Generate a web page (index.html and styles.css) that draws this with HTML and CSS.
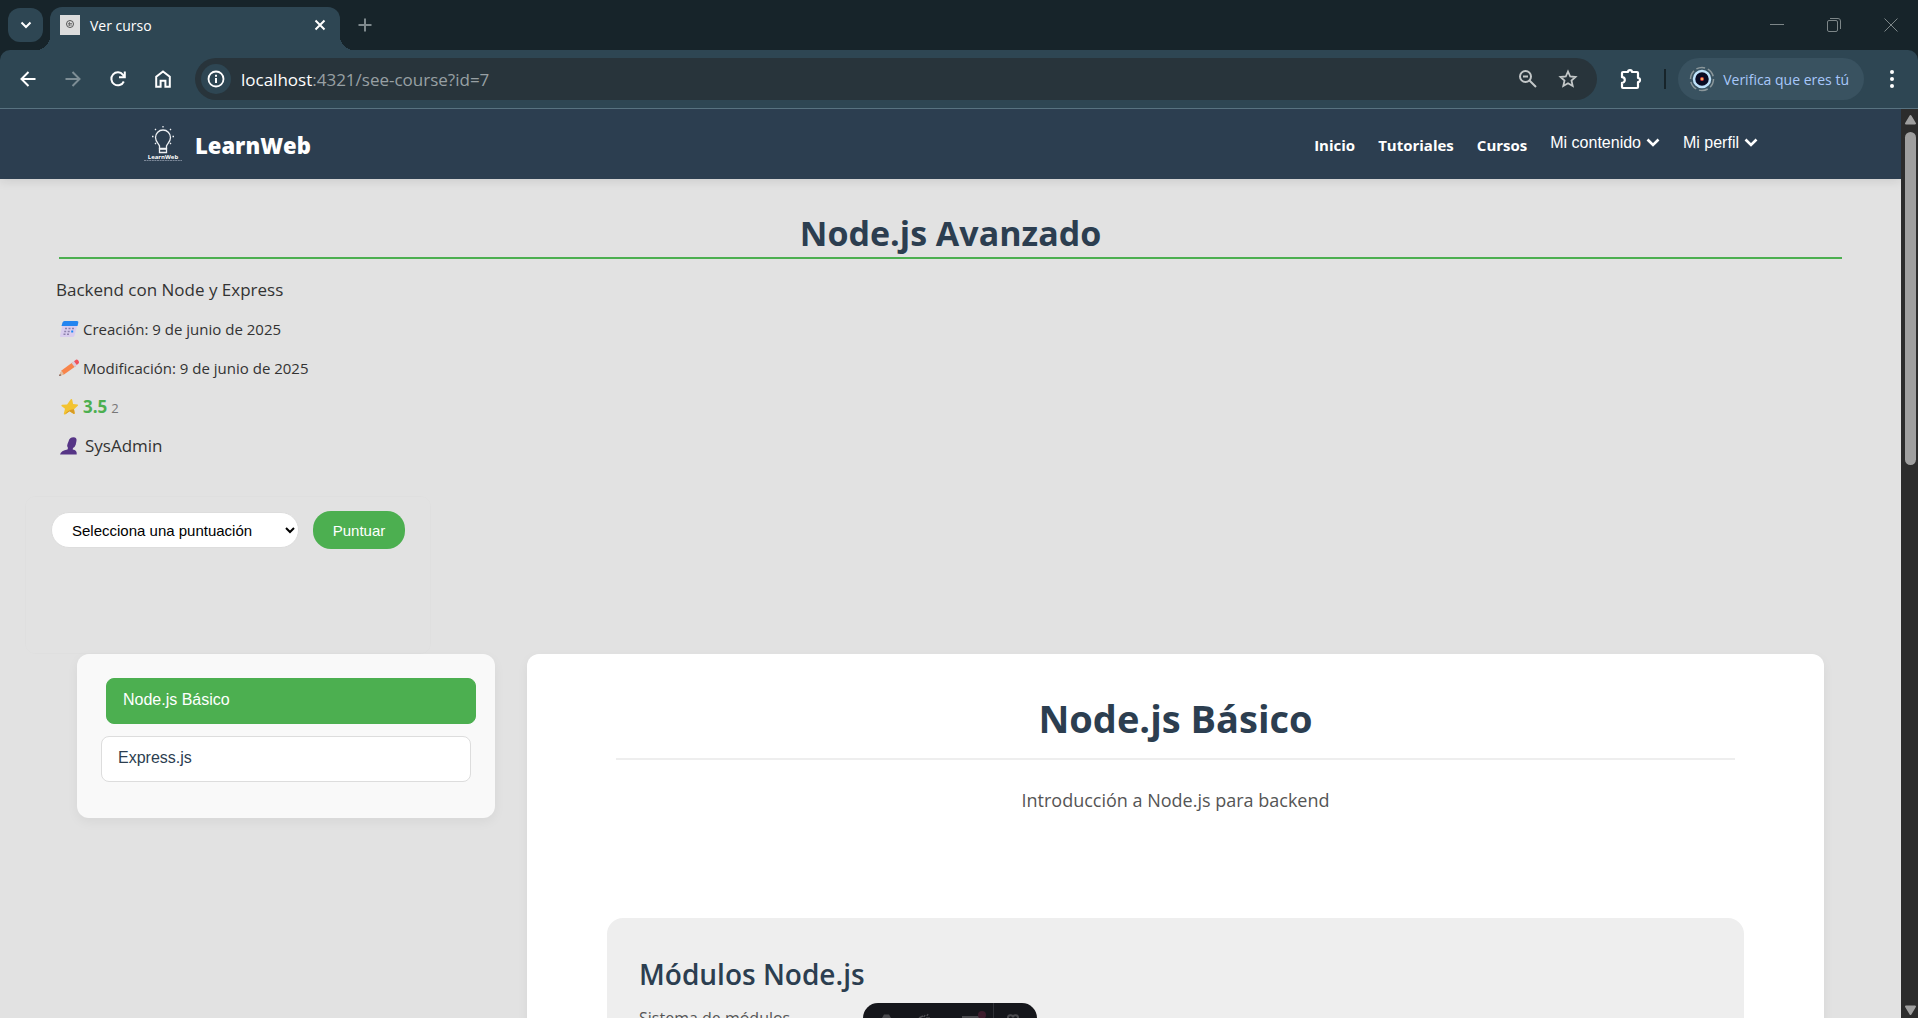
FILE: index.html
```html
<!DOCTYPE html>
<html lang="es">
<head>
<meta charset="utf-8">
<meta name="viewport" content="width=device-width, initial-scale=1">
<title>Ver curso</title>
<link rel="stylesheet" href="styles.css">
</head>
<body>
<div class="browser">
  <div class="tabstrip">
    <button class="tab-search" aria-label="Buscar pestañas">
      <svg width="12" height="8" viewBox="0 0 12 8"><path d="M1.500 1.500 6 6l4.500-4.500" fill="none" stroke="#fff" stroke-width="2"/></svg>
    </button>
    <div class="tab">
      <svg class="favicon" width="20" height="20" viewBox="0 0 20 20"><rect width="20" height="20" fill="#dcdcdc"/><circle cx="10" cy="9" r="3.500" fill="none" stroke="#555" stroke-width="1"/><path d="M8 8.500h4M8 10h4M9.500 7v4" stroke="#666" stroke-width=".8"/></svg>
      <span class="tab-title">Ver curso</span>
      <button class="icon-button tab-close" aria-label="Cerrar pestaña">
        <svg width="12" height="12" viewBox="0 0 12 12"><path d="m1.500 1.500 9 9m0-9-9 9" stroke="#fff" stroke-width="2"/></svg>
      </button>
    </div>
    <button class="icon-button new-tab" aria-label="Nueva pestaña">
      <svg width="14" height="14" viewBox="0 0 14 14"><path d="M7 .5v13M.5 7h13" stroke="#7f898d" stroke-width="2"/></svg>
    </button>
    <div class="window-controls">
      <button class="icon-button" aria-label="Minimizar"><svg width="14" height="14" viewBox="0 0 14 14"><path d="M0 6.500h14" stroke="#7d8688"/></svg></button>
      <button class="icon-button" aria-label="Restaurar"><svg width="14" height="14" viewBox="0 0 14 14"><rect x=".5" y="2.500" width="10" height="11" rx="1.500" fill="none" stroke="#7d8688"/><path d="M3 .5h8a2.500 2.500 0 0 1 2.500 2.500v8" fill="none" stroke="#7d8688"/></svg></button>
      <button class="icon-button" aria-label="Cerrar"><svg width="14" height="14" viewBox="0 0 14 14"><path d="m.5.5 13 13m0-13-13 13" stroke="#7d8688"/></svg></button>
    </div>
  </div>

  <div class="toolbar">
    <div class="toolbar-nav">
      <button class="icon-button" aria-label="Atrás"><svg width="16" height="16" viewBox="0 0 16 16"><path d="M15.500 8H2M8.500 1 1.500 8l7 7" fill="none" stroke="#fff" stroke-width="2"/></svg></button>
      <button class="icon-button" aria-label="Adelante"><svg width="16" height="16" viewBox="0 0 16 16"><path d="M.5 8H14M7.500 1l7 7-7 7" fill="none" stroke="#7d8d95" stroke-width="2"/></svg></button>
      <button class="icon-button" aria-label="Recargar"><svg width="16" height="16" viewBox="0 0 16 16"><path d="M13.800 10.500A6.500 6.500 0 1 1 13 3.800L14.500 5.500M14.800.5v5.700H9" fill="none" stroke="#fff" stroke-width="2"/></svg></button>
      <button class="icon-button" aria-label="Inicio"><svg width="16" height="18" viewBox="0 0 16 18"><path d="M1.200 16.800V6.800L8 1.500l6.800 5.300v10h-4.400v-6H5.600v6z" fill="none" stroke="#fff" stroke-width="2"/></svg></button>
    </div>
    <div class="omnibox">
      <button class="site-info" aria-label="Información del sitio"><svg width="18" height="18" viewBox="0 0 18 18"><circle cx="9" cy="9" r="7.500" fill="none" stroke="#fff" stroke-width="1.800"/><path d="M9 8v5M9 4.800v2" stroke="#fff" stroke-width="2"/></svg></button>
      <div class="url" role="textbox" aria-label="Dirección"><span class="url-host">localhost</span>:4321/see-course?id=7</div>
      <button class="icon-button" aria-label="Zoom"><svg width="20" height="20" viewBox="0 0 20 20"><circle cx="7.500" cy="7.500" r="5.500" fill="none" stroke="#c3c7c8" stroke-width="2"/><path d="m11.500 11.500 6.500 6.500M5 7.500h5" stroke="#c3c7c8" stroke-width="2"/></svg></button>
      <button class="icon-button" aria-label="Agregar a favoritos"><svg width="20" height="20" viewBox="0 0 20 20"><path d="m10 2.500 2.200 5 5.300.5-4 3.600 1.200 5.400-4.700-2.800L5.300 17l1.200-5.400-4-3.600 5.300-.5z" fill="none" stroke="#c3c7c8" stroke-width="1.800"/></svg></button>
    </div>
    <button class="icon-button extensions" aria-label="Extensiones"><svg width="22" height="22" viewBox="0 0 22 22"><path d="M2 5q0-1 1-1H8a2 1.800 0 0 1 4 0H17q1 0 1 1v5a2 2 0 0 1 0 4v5q0 1-1 1H3q-1 0-1-1v-4.200a2.800 2.800 0 0 0 0-5.600z" fill="none" stroke="#fff" stroke-width="2.200" stroke-linejoin="round"/></svg></button>
    <span class="toolbar-divider"></span>
    <button class="profile">
      <svg width="26" height="26" viewBox="0 0 26 26"><circle cx="13" cy="13" r="11.500" fill="none" stroke="#8b979b" stroke-width="1.500" stroke-dasharray="9 3"/><circle cx="13" cy="13" r="8" fill="#0a0c24" stroke="#bfe2fb" stroke-width="2.500"/><circle cx="13" cy="13" r="2" fill="#e0443e"/><circle cx="13" cy="13" r="1" fill="#ffd76b"/></svg>
      <span>Verifica que eres tú</span>
    </button>
    <button class="icon-button menu" aria-label="Menú"><svg width="6" height="20" viewBox="0 0 6 20"><g fill="#fff"><circle cx="3" cy="3" r="2"/><circle cx="3" cy="10" r="2"/><circle cx="3" cy="17" r="2"/></g></svg></button>
  </div>

  <div class="viewport">
    <div class="page">
      <header class="site-header">
        <a class="brand" href="#">
          <svg width="40" height="40" viewBox="0 0 40 40"><g fill="none" stroke="#eef1f4" stroke-width="1.300"><path d="M16.500 23.500v-2.500c-.5-2.500-4-4-4-8.500a7.500 7.500 0 0 1 15 0c0 4.500-3.500 6-4 8.500v2.500z"/><path d="M16.500 24h7v3.500h-7z"/><path d="M20 1v1.500M9 11.500h1.500M29.500 11.500H31M12 4l1 1M28 4l-1 1M12 19l1-1M28 19l-1-1"/></g><text x="20" y="34" text-anchor="middle" class="brand-mark">LearnWeb</text><path d="M1 35.500h38" stroke="#8f9bab" stroke-width=".8" stroke-dasharray="2 .6"/></svg>
          <span class="brand-name">LearnWeb</span>
        </a>
        <nav class="site-nav">
          <a href="#">Inicio</a>
          <a href="#">Tutoriales</a>
          <a href="#">Cursos</a>
          <button class="nav-menu">Mi contenido <svg width="14" height="10" viewBox="0 0 14 10"><path d="m1.500 1.500 5.500 5.500 5.500-5.500" fill="none" stroke="#fff" stroke-width="2.600"/></svg></button>
          <button class="nav-menu">Mi perfil <svg width="14" height="10" viewBox="0 0 14 10"><path d="m1.500 1.500 5.500 5.500 5.500-5.500" fill="none" stroke="#fff" stroke-width="2.600"/></svg></button>
        </nav>
      </header>

      <main>
        <section class="course">
          <h1 class="course-title">Node.js Avanzado</h1>
          <p class="course-description">Backend con Node y Express</p>
          <ul class="course-meta">
            <li><svg width="20" height="18" viewBox="0 0 20 18"><path d="M4 3h15l-3.500 12.500q-.5 1.500-2 1.500H2q-1.500 0-1-1.500z" fill="#d9cdee"/><path d="M5.500 1H18q1.800 0 1.300 1.800L18.500 6H2.500l1-3.500Q4 1 5.500 1z" fill="#2385f0"/><path d="M6 8.500h2m1.500 0h2m1.500 0h2M5.200 11.500h2m1.500 0h2M4.500 14.300h2m1.500 0h2" stroke="#8d82ad" stroke-width="1.500"/><path d="M12.200 11.500h2" stroke="#1787f5" stroke-width="2"/></svg><span>Creación: 9 de junio de 2025</span></li>
            <li><svg width="20" height="18" viewBox="0 0 20 18"><path d="m0 17 2.500-5.500L14 3l3 4L5 15.500z" fill="#f8844a"/><path d="m0 17 2.500-5.500L5 15.500z" fill="#dfc0a5"/><path d="m0 17 1-2 1.200 1.300z" fill="#584b52"/><path d="M12.500 4 15 2l3 4-2.500 2z" fill="#d9ccdc"/><path d="m15 2.200 2.300-1.700q2.700 0 2.700 3.500l-2.200 2z" fill="#f0525c"/></svg><span>Modificación: 9 de junio de 2025</span></li>
            <li><svg width="20" height="18" viewBox="0 0 20 18"><path d="M12 1q1-.3 1.200.7l.9 4.300 4.500.5q1 .4.200 1.300l-3.800 3.500.7 4q-.2 1-1.200.5l-4-2.500-4.500 3.200q-1.200.3-1.200-.8l1.200-5L2.500 8q-.5-1 .6-1.200l5-.3z" fill="#f3c331"/><path d="m15 11.300.7 4q-.2 1-1.200.5l-4-2.500-4.500 3.200q2-4.500 9-5.200z" fill="#d89b25"/></svg><span><strong>3.5</strong> <small>2</small></span></li>
            <li class="course-author"><svg width="20" height="18" viewBox="0 0 20 18"><path d="M9.500 4.500Q10.500.3 14.500.3q3.500 0 3 3.500l-.8 4q-1 2.700-2.700 3.200l-.3 1.500q4.500.5 4 5H1q1-4 7.500-5l.5-1.500q-1.500-2-.5-4z" fill="#563586"/></svg><span>SysAdmin</span></li>
          </ul>
          <form class="rating">
            <select aria-label="Puntuación"><option>Selecciona una puntuación</option><option>1</option><option>2</option><option>3</option><option>4</option><option>5</option></select>
            <button type="button">Puntuar</button>
          </form>
        </section>

        <div class="course-body">
          <aside class="lessons">
            <button class="lesson is-active">Node.js Básico</button>
            <button class="lesson">Express.js</button>
          </aside>
          <article class="lesson-content">
            <h2>Node.js Básico</h2>
            <p class="lesson-intro">Introducción a Node.js para backend</p>
            <section class="module">
              <h3>Módulos Node.js</h3>
              <p>Sistema de módulos</p>
            </section>
          </article>
        </div>
      </main>
    </div>
    <div class="scrollbar" aria-hidden="true">
      <svg width="13" height="11" viewBox="0 0 13 11"><path d="M6.500 2 11 9.500H2z" fill="#9f9f9f" stroke="#9f9f9f" stroke-width="2" stroke-linejoin="round"/></svg>
      <div class="scroll-track"><div class="scroll-thumb"></div></div>
      <svg width="13" height="11" viewBox="0 0 13 11"><path d="M6.500 9 11 1.500H2z" fill="#9f9f9f" stroke="#9f9f9f" stroke-width="2" stroke-linejoin="round"/></svg>
    </div>
  </div>

  <div class="capture-bar" aria-hidden="true">
    <svg width="174" height="15" viewBox="0 0 174 15"><path d="M130.500 0v15" stroke="#303136"/><path d="m19 15 2-3.500h5l2 3.500z" fill="#4a4a4e"/><path d="m56 15 4-2M62 12l-1 2M65 11l-1 2M63 15h4" stroke="#4a4a4e" stroke-width="1.500"/><path d="M99 13h17v2H99z" fill="#4a4a4e"/><circle cx="119" cy="12" r="4" fill="#3d1d2d"/><path d="M145 15a2.500 2.500 0 0 1 5-.5 2.500 2.500 0 0 1 5 .5" fill="none" stroke="#4a4a4e" stroke-width="2"/></svg>
  </div>
</div>
</body>
</html>
```
FILE: styles.css
```css
*, *::before, *::after { box-sizing: border-box; }

body {
  margin: 0;
  font-family: "Open Sans", "Noto Sans", sans-serif;
  color: #333;
}

h1, h2, h3, p, ul { margin: 0; padding: 0; }
ul { list-style: none; }
a { color: inherit; text-decoration: none; }
button { border: 0; padding: 0; background: none; font-family: inherit; color: inherit; }
svg { display: block; flex: none; }

.browser {
  position: relative;
  display: flex;
  flex-direction: column;
  height: 100vh;
  overflow: hidden;
  background: #17242a;
}

.icon-button {
  display: grid;
  place-items: center;
  width: 32px;
  height: 32px;
  flex: none;
}

/* Tab strip */
.tabstrip {
  display: flex;
  align-items: center;
  height: 50px;
  flex: none;
  padding-left: 8px;
}

.tab-search {
  display: grid;
  place-items: center;
  width: 35px;
  height: 34px;
  border-radius: 12px;
  background: #2e4653;
}

.tab {
  position: relative;
  display: flex;
  align-items: center;
  gap: 10px;
  width: 290px;
  height: 43px;
  margin: 7px 0 0 7px;
  padding: 0 4px 7px 10px;
  border-radius: 12px 12px 0 0;
  background: #2e4653;
}

.tab::before, .tab::after {
  content: "";
  position: absolute;
  bottom: 0;
  width: 14px;
  height: 14px;
}
.tab::before { right: 100%; background: radial-gradient(circle at 0 0, transparent 14px, #2e4653 14px); }
.tab::after { left: 100%; background: radial-gradient(circle at 100% 0, transparent 14px, #2e4653 14px); }

.tab-title { flex: 1; font-size: 14px; color: #fff; }
.new-tab { margin-left: 9px; }

.window-controls {
  display: flex;
  gap: 25px;
  margin-left: auto;
  padding-right: 11px;
}

/* Toolbar */
.toolbar {
  display: flex;
  align-items: center;
  height: 59px;
  flex: none;
  border-bottom: 1px solid #587280;
  border-radius: 10px 10px 0 0;
  background: #2e4653;
}

.toolbar-nav { display: flex; gap: 13px; padding: 0 16px 0 12px; }

.omnibox {
  display: flex;
  align-items: center;
  gap: 8px;
  flex: 1;
  height: 42px;
  padding: 0 13px 0 6px;
  border-radius: 21px;
  background: #28343b;
}

.site-info {
  display: grid;
  place-items: center;
  width: 30px;
  height: 30px;
  border-radius: 50%;
  background: #2e4653;
}

.url { flex: 1; padding-left: 2px; font-size: 17px; color: #98a0a4; }
.url-host { color: #fff; }

.extensions { margin: 0 17px 0 18px; }
.toolbar-divider { width: 2px; height: 20px; background: #17242a; }

.profile {
  display: flex;
  align-items: center;
  gap: 8px;
  height: 42px;
  margin-left: 12px;
  padding: 0 15px 0 11px;
  border-radius: 21px;
  background: #395260;
  font-size: 14px;
  color: #a8c7fa;
}

.menu { margin: 0 10px 0 12px; }

/* Page viewport */
.viewport { display: flex; flex: 1; min-height: 0; }

.page { flex: 1; overflow: hidden; background: #e2e2e2; }

.scrollbar {
  display: flex;
  flex-direction: column;
  align-items: center;
  gap: 7px;
  width: 17px;
  padding: 5px 0 2px 1px;
  background: #2c2c2c;
}
.scroll-track { flex: 1; }
.scroll-thumb { width: 11px; height: 333px; border-radius: 6px; background: #9f9f9f; }

/* Site header */
.site-header {
  position: relative;
  display: flex;
  align-items: center;
  justify-content: space-between;
  height: 70px;
  padding: 2px 143px 0;
  background: #2c3e50;
  box-shadow: 0 2px 10px rgba(0, 0, 0, .1);
  color: #fff;
}

.brand { display: flex; align-items: center; gap: 12px; }
.brand-name { font-size: 22px; font-weight: 800; }
.brand-mark { font-family: "Open Sans", sans-serif; font-size: 6px; font-weight: 700; fill: #fff; }

.site-nav { display: flex; align-items: center; gap: 23px; font-size: 15px; font-weight: 700; }

.nav-menu {
  display: flex;
  align-items: center;
  gap: 5px;
  padding-bottom: 4px;
  font-family: "Liberation Sans", Arial, sans-serif;
  font-size: 16px;
}

/* Course summary */
.course { padding: 30px 59px 0; }

.course-title {
  border-bottom: 2px solid #4caf50;
  font-size: 34px;
  font-weight: 700;
  line-height: 48px;
  text-align: center;
  color: #2c3e50;
}

.course-description { margin: 16px -3px 4px; font-size: 17px; line-height: 30px; }

.course-meta li {
  display: flex;
  align-items: center;
  gap: 4px;
  height: 39px;
  font-size: 15px;
}
.course-meta strong { font-size: 17px; color: #4caf50; }
.course-meta small { font-size: 13px; color: #777; }
.course-meta .course-author { gap: 6px; font-size: 17px; }

.rating {
  display: flex;
  align-items: center;
  gap: 14px;
  width: 406px;
  margin: 31px -34px 0;
  padding: 14px 25px 104px;
  border: 1px solid rgba(0, 0, 0, .01);
  border-radius: 10px;
  font-family: "Liberation Sans", Arial, sans-serif;
}
.rating select {
  width: 248px;
  height: 36px;
  padding: 0 16px;
  border: 1px solid #ddd;
  border-radius: 18px;
  background-color: #fff;
  font: inherit;
  font-size: 15px;
  color: #000;
}
.rating button {
  height: 38px;
  flex: 1;
  border-radius: 18px;
  background: #4caf50;
  font-family: inherit;
  font-size: 15px;
  color: #fff;
}

/* Lessons */
.course-body {
  display: grid;
  grid-template-columns: 418px 1fr;
  align-items: start;
  gap: 32px;
  padding: 0 77px;
}

.lessons {
  display: grid;
  gap: 12px;
  padding: 24px 24px 36px;
  border-radius: 12px;
  background: #f9f9f9;
  box-shadow: 0 4px 12px rgba(0, 0, 0, .05);
}

.lesson {
  height: 46px;
  padding: 0 16px 2px;
  border: 1px solid #ddd;
  border-radius: 8px;
  background: #fff;
  font-family: "Liberation Sans", Arial, sans-serif;
  font-size: 16px;
  text-align: left;
  color: #2c3e50;
}
.lesson.is-active {
  border-color: #4caf50;
  background: #4caf50;
  color: #fff;
  transform: translateX(5px);
}

.lesson-content {
  min-height: 600px;
  padding: 32px 80px;
  border-radius: 12px;
  background: #fff;
  box-shadow: 0 4px 12px rgba(0, 0, 0, .05);
}
.lesson-content h2 {
  margin: 0 9px;
  padding-bottom: 8px;
  border-bottom: 2px solid #eee;
  font-size: 38px;
  line-height: 64px;
  text-align: center;
  color: #2c3e50;
}
.lesson-intro { margin: 24px 0 102px; font-size: 18px; line-height: 32px; text-align: center; color: #555; }

.module { min-height: 300px; padding: 32px; border-radius: 16px; background: #eee; }
.module h3 { font-size: 28px; font-weight: 600; line-height: 48px; color: #2c3e50; }
.module p { padding-top: 6px; font-size: 16px; line-height: 28px; color: #555; }

/* Floating capture bar peeking in from below */
.capture-bar {
  position: absolute;
  bottom: 0;
  left: 45%;
  overflow: hidden;
  border-radius: 20px 20px 0 0;
  background: #15161b;
}
```
